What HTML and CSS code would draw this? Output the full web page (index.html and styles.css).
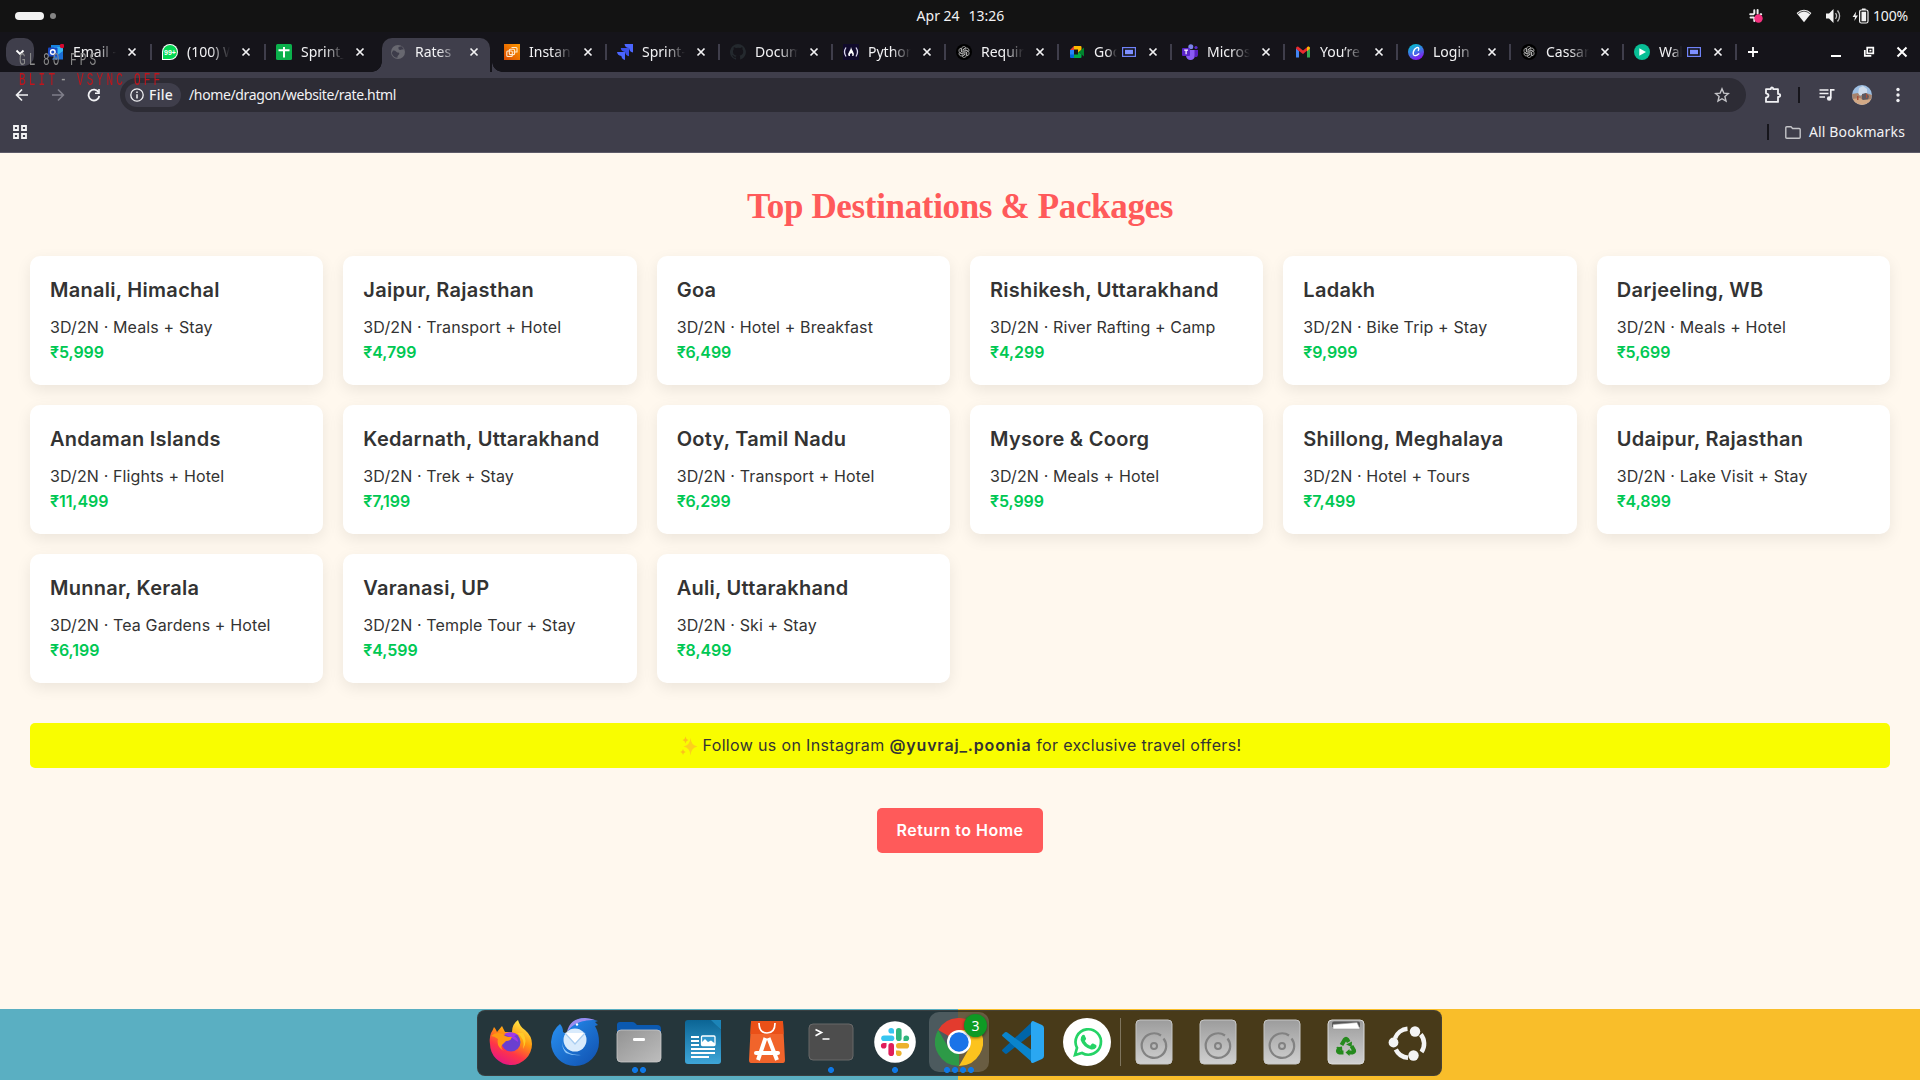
FILE: index.html
```html
<!DOCTYPE html>
<html lang="en">
<head>
<meta charset="utf-8">
<title>Rates</title>
<link rel="stylesheet" href="styles.css">
</head>
<body>
<svg class="defs" width="0" height="0" aria-hidden="true">
  <defs>
    <linearGradient id="grey" x1="0" y1="0" x2="0" y2="1"><stop offset="0" stop-color="#9c9c9c"/><stop offset="1" stop-color="#d0d0d0"/></linearGradient>
    <linearGradient id="folder" x1="0" y1="0" x2="1" y2="1"><stop offset="0" stop-color="#939393"/><stop offset="1" stop-color="#bdbdbd"/></linearGradient>
    <linearGradient id="fox" x1=".8" y1="0" x2=".3" y2="1"><stop offset="0" stop-color="#fff44f"/><stop offset=".4" stop-color="#ff980e"/><stop offset=".7" stop-color="#ff3647"/><stop offset="1" stop-color="#e31587"/></linearGradient>
    <linearGradient id="bird" x1="0" y1="0" x2="1" y2="1"><stop offset="0" stop-color="#2a94f4"/><stop offset="1" stop-color="#0f4fae"/></linearGradient>
    <linearGradient id="orange" x1="0" y1="1" x2="1" y2="0"><stop offset="0" stop-color="#d94a00"/><stop offset="1" stop-color="#ff9900"/></linearGradient>
    <linearGradient id="canva" x1=".2" y1="0" x2=".6" y2="1"><stop offset="0" stop-color="#00c4cc"/><stop offset=".5" stop-color="#3c78e6"/><stop offset="1" stop-color="#8b10f0"/></linearGradient>
    <linearGradient id="writer" x1="0" y1="0" x2="0" y2="1"><stop offset="0" stop-color="#0b6595"/><stop offset="1" stop-color="#3ea6d8"/></linearGradient>
    <symbol id="close" viewBox="0 0 10 10"><path d="M1.500 1.500l7 7m0-7l-7 7" stroke="#f2f2f4" stroke-width="1.700" fill="none"/></symbol>
    <symbol id="openai" viewBox="0 0 16 16"><circle cx="8" cy="8" r="8" fill="#000"/><g fill="none" stroke="#c9c9c9" stroke-width=".7"><path id="petal" d="M5.600 8.200V4.800a2.300 2.300 0 0 1 4.300-1.100L7.200 5.300v2.800"/><use href="#petal" transform="rotate(60 8 8)"/><use href="#petal" transform="rotate(120 8 8)"/><use href="#petal" transform="rotate(180 8 8)"/><use href="#petal" transform="rotate(240 8 8)"/><use href="#petal" transform="rotate(300 8 8)"/></g></symbol>
    <symbol id="share" viewBox="0 0 14 10"><rect x=".6" y=".6" width="12.800" height="8.800" fill="none" stroke="#6f82f8" stroke-width="1.200"/><rect x="3" y="2.800" width="8" height="4.400" fill="#7e90ff"/></symbol>
    <symbol id="disk" viewBox="0 0 48 48"><rect x="6" y="2" width="36" height="44" rx="4" fill="url(#grey)" stroke="#c6c6c6" stroke-width="1"/><path d="M31 17.500A12.300 12.300 0 1 0 36.200 29" fill="none" stroke="#828282" stroke-width="2.200"/><path d="M33.500 20.500a12.300 12.300 0 0 1 2.700 8.500" fill="none" stroke="#828282" stroke-width="2.200"/><circle cx="24" cy="28" r="3" fill="none" stroke="#828282" stroke-width="2"/></symbol>
  </defs>
</svg>

<header class="topbar">
  <div class="workspaces"><span class="ws-active"></span><span class="ws-dot"></span></div>
  <div class="clock"><span>Apr 24</span><span>13:26</span></div>
  <div class="tray">
    <svg class="tray-slack" width="16" height="16" viewBox="0 0 16 16"><g stroke="#eee" stroke-width="2" stroke-linecap="round"><path d="M2.200 6.200h3.300M6.300 2.300v.2M6.300 3v2.300M9.600 2v3.400M12.600 6.300h.6M2.600 9.600h.3M3.800 9.600h1.800M6.300 9.800v3.300"/></g><circle cx="10.500" cy="10.500" r="4.200" fill="#f5317f"/></svg>
    <svg class="tray-wifi" width="16" height="14" viewBox="0 0 16 14"><path d="M.6 4Q8-2.500 15.400 4L8 13.300z" fill="#f2f2f2"/><path d="M2 4.700Q8-.3 14 4.700" fill="none" stroke="#555" stroke-width="1"/></svg>
    <svg class="tray-vol" width="17" height="16" viewBox="0 0 17 16"><path d="M1 5.500h3L8.500 1v14L4 10.500H1z" fill="#f2f2f2"/><path d="M10.500 5.200q2.200 2.800 0 5.600M12.500 2.500q4.200 5.500 0 11" fill="none" stroke="#bbb" stroke-width="1.300"/></svg>
    <svg class="tray-bat" width="17" height="16" viewBox="0 0 17 16"><path d="M4.200 3.500L.6 9H3l-.7 4L6 7.400H3.500z" fill="#f2f2f2"/><rect x="7.600" y="2" width="8.400" height="13" rx="1.800" fill="none" stroke="#f2f2f2" stroke-width="1.200"/><path d="M9.500 3.800h4.600v9.400H9.500zM10 .4h3.600V2H10z" fill="#f2f2f2"/></svg>
    <span>100%</span>
  </div>
</header>

<section class="browser">
  <div class="tabstrip">
    <button class="tab-search"><svg width="10" height="7" viewBox="0 0 10 7"><path d="M1.500 1.500L5 5l3.500-3.500" fill="none" stroke="#fff" stroke-width="1.800"/></svg></button>
    <div class="tabs">
      <div class="tab"><svg class="fav" viewBox="0 0 16 16"><path d="M3 1h9v10H3z" fill="#1684e0"/><path d="M6 3h9v5L6 14z" fill="#36b7f5"/><path d="M4 15l11-8v8.500H4z" fill="#1b6fd8"/><rect x="0" y="3.500" width="9.500" height="9" rx="1" fill="#1a49c4"/><circle cx="4.800" cy="8" r="2.300" fill="none" stroke="#fff" stroke-width="1.400"/><circle cx="14" cy="2" r="2.200" fill="#d6082e"/></svg><span class="label">Email -</span><svg class="x"><use href="#close"/></svg></div>
      <div class="tab"><svg class="fav" viewBox="0 0 16 16"><path d="M0 16V8a8 8 0 1 1 8 8z" fill="#fff"/><path d="M1 15V8a7 7 0 1 1 7 7z" fill="#06d755"/><text x="8" y="10.800" class="fav-99">99+</text></svg><span class="label">(100) W</span><svg class="x"><use href="#close"/></svg></div>
      <div class="tab no-sep"><svg class="fav" viewBox="0 0 16 16"><rect width="16" height="16" rx="1.500" fill="#0bb14c"/><path d="M2.500 6.200h11M8 3v10.500" stroke="#fff" stroke-width="2"/></svg><span class="label">Sprint_</span><svg class="x"><use href="#close"/></svg></div>
      <div class="tab active"><svg class="fav" viewBox="0 0 16 16"><circle cx="8" cy="8" r="7" fill="#686870"/><path d="M3 6.500q2-.5 3 1t3 1q1 1.500-.5 2.500t-1 2.800Q3 13.500 1.800 9zM8.500 3l3-.8 2.500 3-2 .3q-2.500 1-3.500-.6z" fill="#3d3c4a"/></svg><span class="label">Rates |</span><svg class="x"><use href="#close"/></svg></div>
      <div class="tab"><svg class="fav" viewBox="0 0 16 16"><rect width="16" height="16" fill="url(#orange)"/><g fill="none" stroke="#ffe9cf" stroke-width="1.100"><rect x="2.800" y="7" width="5.500" height="5.500" rx="1"/><rect x="5.300" y="5.300" width="5.300" height="5.300" rx="1"/><path d="M7.500 3.500H12q1 0 1 1v3.500H9.500"/></g></svg><span class="label">Instanc</span><svg class="x"><use href="#close"/></svg></div>
      <div class="tab"><svg class="fav" viewBox="0 0 16 16"><path d="M7.500 0H16v8.500Q12.500 8 12 4 8 3.800 7.500 0z" fill="#4b66ff"/><path d="M3.800 4h8.200v8.200Q8.800 12 8 8 4 7.500 3.800 4z" fill="#3a4fe8"/><path d="M0 8h8v8Q5 15.500 4.300 12 .5 11.500 0 8z" fill="#4b66ff"/></svg><span class="label">Sprint-</span><svg class="x"><use href="#close"/></svg></div>
      <div class="tab"><svg class="fav" viewBox="0 0 16 16"><path d="M8 0a8 8 0 0 0-2.500 15.600c.4 0 .5-.2.500-.4v-1.500c-2.200.5-2.700-1-2.700-1-.4-.9-.9-1.200-.9-1.200-.7-.5 0-.5 0-.5.8.1 1.200.8 1.200.8.8 1.300 2 .9 2.500.7 0-.5.300-.9.500-1.100-1.800-.2-3.600-.9-3.600-4 0-.9.300-1.600.8-2.100 0-.2-.4-1 .1-2.100 0 0 .7-.2 2.200.8a8 8 0 0 1 4 0c1.500-1 2.200-.8 2.200-.8.4 1.100.2 1.900.1 2.100.5.600.8 1.300.8 2.100 0 3.100-1.900 3.800-3.700 4 .3.300.6.800.6 1.500v2.200c0 .2.100.5.600.4A8 8 0 0 0 8 0z" fill="#24292e"/></svg><span class="label">Docum</span><svg class="x"><use href="#close"/></svg></div>
      <div class="tab"><svg class="fav" viewBox="0 0 16 16"><rect width="16" height="16" fill="#100a2b"/><path d="M3 3.500q-3 4.500 0 9M13 3.500q3 4.500 0 9" fill="none" stroke="#d9d6ef" stroke-width="1.300"/><path d="M8 3q.6 2.500 2 4.500t.4 4.500H9.200Q10 9.500 8.200 9q-2 .8-1.200 3H5.600Q4.600 9.500 6.300 7.500T8 3z" fill="#fff"/></svg><span class="label">Python</span><svg class="x"><use href="#close"/></svg></div>
      <div class="tab"><svg class="fav"><use href="#openai"/></svg><span class="label">Requir</span><svg class="x"><use href="#close"/></svg></div>
      <div class="tab"><svg class="fav" viewBox="0 0 16 16"><path d="M1 6l4-4v4z" fill="#ea4335"/><path d="M5 2h6.500q1 0 1 1v3.500L9 9V5.500H5z" fill="#ffba00"/><path d="M1 6h4v5H1z" fill="#2684fc"/><path d="M1 10.500h4V14H2q-1 0-1-1z" fill="#0066da"/><path d="M5 10.500h4V8l3.500 2v3q0 1-1 1H5z" fill="#00ac47"/><path d="M9.500 8L15 3.500v9z" fill="#00832d"/></svg><span class="label short">Goo</span><svg class="share"><use href="#share"/></svg><svg class="x"><use href="#close"/></svg></div>
      <div class="tab"><svg class="fav" viewBox="0 0 16 16"><circle cx="8.800" cy="2.800" r="2.500" fill="#7b83eb"/><circle cx="14" cy="3.500" r="1.600" fill="#5b2bd0"/><path d="M4 6h9v5.500a4.500 4.500 0 0 1-9 0z" fill="#8a5cf5"/><path d="M12.500 6H16v4.500q0 3-3.500 2.500z" fill="#5b20c5"/><rect x="0" y="4" width="8" height="8" rx="1" fill="#5a25c9"/><path d="M2.200 6.200h3.800M4.100 6.200v4" stroke="#fff" stroke-width="1.200"/></svg><span class="label">Micros</span><svg class="x"><use href="#close"/></svg></div>
      <div class="tab"><svg class="fav" viewBox="0 0 16 16"><path d="M1 4v9.500h3V7z" fill="#4285f4"/><path d="M12 7v6.500h3V4z" fill="#34a853"/><path d="M1 4.500Q1 2.500 3 2.600L8 6.500l5-3.900q2-.1 2 1.900L12 7.200v-.4L8 10 4 7v.2z" fill="#ea2a2f"/><path d="M12 3.500l1-.9q2-.1 2 1.900l-3 2.700z" fill="#fbbc04"/></svg><span class="label">You’re</span><svg class="x"><use href="#close"/></svg></div>
      <div class="tab"><svg class="fav" viewBox="0 0 16 16"><circle cx="8" cy="8" r="8" fill="url(#canva)"/><path d="M10.300 6.500q1-1.700.2-2.700-1.400-1-3.600 1.200-2.400 3-1.500 5.500 1.500 2.700 5.500-.7" fill="none" stroke="#fff" stroke-width="1.300" stroke-linecap="round"/></svg><span class="label">Login |</span><svg class="x"><use href="#close"/></svg></div>
      <div class="tab"><svg class="fav"><use href="#openai"/></svg><span class="label">Cassan</span><svg class="x"><use href="#close"/></svg></div>
      <div class="tab"><svg class="fav" viewBox="0 0 16 16"><circle cx="8" cy="8" r="8" fill="#08be95"/><path d="M5.300 4.300L12 8l-6.700 3.700z" fill="#fff"/></svg><span class="label short">Wal</span><svg class="share"><use href="#share"/></svg><svg class="x"><use href="#close"/></svg></div>
    </div>
    <svg class="newtab" width="12" height="12" viewBox="0 0 12 12"><path d="M6 1v10M1 6h10" stroke="#fff" stroke-width="1.800"/></svg>
    <div class="winctl">
      <svg width="12" height="12" viewBox="0 0 12 12"><path d="M1 10h10" stroke="#fff" stroke-width="2"/></svg>
      <svg width="12" height="12" viewBox="0 0 12 12"><path d="M4.200 1.700h6.100v5.600H4.200zM1.800 4v5.900h6.500" fill="none" stroke="#fff" stroke-width="1.700"/><path d="M6.400 3.800h2v1.600h-2z" fill="#fff"/></svg>
      <svg width="12" height="12" viewBox="0 0 12 12"><path d="M1.500 1.500l9 9m0-9l-9 9" stroke="#fff" stroke-width="2"/></svg>
    </div>
  </div>

  <div class="toolbar">
    <div class="nav">
      <svg width="14" height="14" viewBox="0 0 14 14"><path d="M13 7H2M7 1.500L1.600 7 7 12.500" fill="none" stroke="#f1f1f4" stroke-width="1.700"/></svg>
      <svg width="14" height="14" viewBox="0 0 14 14"><path d="M1 7h11M7 1.500L12.400 7 7 12.500" fill="none" stroke="#7f7e8a" stroke-width="1.600"/></svg>
      <svg width="14" height="14" viewBox="0 0 14 14"><path d="M11.600 4.300A5.400 5.400 0 1 0 12.300 8" fill="none" stroke="#f1f1f4" stroke-width="1.800"/><path d="M12.800 1v5H8V4.400h3.200V1z" fill="#f1f1f4"/></svg>
    </div>
    <div class="omnibox">
      <div class="chip"><svg width="14" height="14" viewBox="0 0 14 14"><circle cx="7" cy="7" r="6.200" fill="none" stroke="#f1f1f4" stroke-width="1.300"/><path d="M7 6.300v4.200M7 3.500v1.500" stroke="#f1f1f4" stroke-width="1.500"/></svg><span>File</span></div>
      <span class="url">/home/dragon/website/rate.html</span>
      <svg class="star" width="16" height="16" viewBox="0 0 16 16"><path d="M8 1.800l1.800 4.300 4.600.4-3.500 3 1.100 4.600L8 11.700l-4 2.400 1.100-4.600-3.500-3 4.600-.4z" fill="none" stroke="#c4c4c8" stroke-width="1.400"/></svg>
    </div>
    <div class="actions">
      <svg width="18" height="18" viewBox="0 0 18 18"><path d="M2 3.200h4.700q0-1.700 1.300-1.700t1.300 1.700H14v4.700q2.200 0 2.200 1.500T14 10.900v5H2v-4.200q2.500-.5 2.500-2.200T2 7.300z" fill="none" stroke="#f1f1f4" stroke-width="1.800" stroke-linejoin="round"/></svg>
      <span class="divider"></span>
      <svg width="16" height="14" viewBox="0 0 16 14"><path d="M.5 2h9M.5 5.500h9M.5 9h5.500M11.800 10V1.800h3.700" fill="none" stroke="#f1f1f4" stroke-width="1.700"/><circle cx="10.200" cy="10.500" r="2.300" fill="#f1f1f4"/></svg>
      <svg width="20" height="20" viewBox="0 0 20 20"><clipPath id="av"><circle cx="10" cy="10" r="10"/></clipPath><g clip-path="url(#av)"><path d="M0 0h20v20H0z" fill="#9dbfe3"/><path d="M7 3l4-2 4 3v6H6z" fill="#cfdceb"/><path d="M0 9l6-1 2 3 6-3 6 2v8H0z" fill="#a5836d"/><path d="M10 9l4-1 3 3-1 4h-6z" fill="#5f5a60"/><path d="M0 14l8-1 3 2 9-1v6H0z" fill="#d2a986"/><path d="M5 11h1.500v4H5zM14 9h1.200v4H14z" fill="#a8503b"/></g></svg>
      <svg width="4" height="16" viewBox="0 0 4 16"><g fill="#f1f1f4"><circle cx="2" cy="2.500" r="1.700"/><circle cx="2" cy="8" r="1.700"/><circle cx="2" cy="13.500" r="1.700"/></g></svg>
    </div>
  </div>

  <div class="bookmarks">
    <svg width="14" height="14" viewBox="0 0 14 14"><path d="M1 1h4v4H1zM9 1h4v4H9zM1 9h4v4H1zM9 9h4v4H9z" fill="none" stroke="#f4f4f6" stroke-width="1.800"/></svg>
    <div class="all"><span class="divider"></span><svg width="16" height="13" viewBox="0 0 16 13"><path d="M.8 1.800q0-1 1-1H6l1.600 1.700h6.600q1 0 1 1v7.700q0 1-1 1H1.800q-1 0-1-1z" fill="none" stroke="#c4c4c8" stroke-width="1.400"/></svg><span>All Bookmarks</span></div>
  </div>
</section>

<div class="overlay">
  <span class="o1">GL</span><span class="o2">80</span><span class="o3">FPS</span>
  <span class="o4">BLIT</span><span class="o5">-</span><span class="o6">VSYNC</span><span class="o7">OFF</span>
</div>

<main class="page">
  <h1>Top Destinations &amp; Packages</h1>
  <div class="grid">
    <article class="card"><h3>Manali, Himachal</h3><p>3D/2N · Meals + Stay</p><p class="price">₹5,999</p></article>
    <article class="card"><h3>Jaipur, Rajasthan</h3><p>3D/2N · Transport + Hotel</p><p class="price">₹4,799</p></article>
    <article class="card"><h3>Goa</h3><p>3D/2N · Hotel + Breakfast</p><p class="price">₹6,499</p></article>
    <article class="card"><h3>Rishikesh, Uttarakhand</h3><p>3D/2N · River Rafting + Camp</p><p class="price">₹4,299</p></article>
    <article class="card"><h3>Ladakh</h3><p>3D/2N · Bike Trip + Stay</p><p class="price">₹9,999</p></article>
    <article class="card"><h3>Darjeeling, WB</h3><p>3D/2N · Meals + Hotel</p><p class="price">₹5,699</p></article>
    <article class="card"><h3>Andaman Islands</h3><p>3D/2N · Flights + Hotel</p><p class="price">₹11,499</p></article>
    <article class="card"><h3>Kedarnath, Uttarakhand</h3><p>3D/2N · Trek + Stay</p><p class="price">₹7,199</p></article>
    <article class="card"><h3>Ooty, Tamil Nadu</h3><p>3D/2N · Transport + Hotel</p><p class="price">₹6,299</p></article>
    <article class="card"><h3>Mysore &amp; Coorg</h3><p>3D/2N · Meals + Hotel</p><p class="price">₹5,999</p></article>
    <article class="card"><h3>Shillong, Meghalaya</h3><p>3D/2N · Hotel + Tours</p><p class="price">₹7,499</p></article>
    <article class="card"><h3>Udaipur, Rajasthan</h3><p>3D/2N · Lake Visit + Stay</p><p class="price">₹4,899</p></article>
    <article class="card"><h3>Munnar, Kerala</h3><p>3D/2N · Tea Gardens + Hotel</p><p class="price">₹6,199</p></article>
    <article class="card"><h3>Varanasi, UP</h3><p>3D/2N · Temple Tour + Stay</p><p class="price">₹4,599</p></article>
    <article class="card"><h3>Auli, Uttarakhand</h3><p>3D/2N · Ski + Stay</p><p class="price">₹8,499</p></article>
  </div>
  <div class="banner">
    <svg width="19" height="20" viewBox="0 0 19 20"><path d="M11.500 2q.7 7.500 7 8.500-6.300 1-7 9-.7-8-7-9 6.300-1 7-8.500z" fill="#fdd01c"/><path d="M6.500.5q.3 3 3 3.500-2.700.5-3 3.500-.3-3-3-3.500 2.700-.5 3-3.500zM4 13q.3 2.500 2.800 3-2.500.5-2.800 3-.3-2.500-2.800-3 2.500-.5 2.800-3z" fill="#fcc21b"/></svg>
    <span>Follow us on Instagram <b>@yuvraj_.poonia</b> for exclusive travel offers!</span>
  </div>
  <a class="home">Return to Home</a>
</main>

<footer class="desktop">
  <nav class="dock">
    <div class="app"><svg width="48" height="48" viewBox="0 0 48 48"><path d="M4 15q2-3 3-6 2 2 3 5l5-6 3 6h7q0-8 6-12 2 7 7 10 7 6 7 14A21 21 0 0 1 3 26Q2 20 4 15z" fill="url(#fox)"/><circle cx="24" cy="24" r="9.500" fill="#6a3fd0"/><path d="M17 16q8-4 14 1-2 0-4 1 4 2 4 6l-6-4z" fill="#a13ae6"/><path d="M4 18q5-5 12-2 1 3 9 3-1 4-6 4l-4 4q-2 3 2 6-8-4-6-12-4-3-7-3z" fill="#ff9a12"/><path d="M30 15q9 6 6 16 5-8 0-16z" fill="#ffca28"/></svg></div>
    <div class="app"><svg width="48" height="48" viewBox="0 0 48 48"><path d="M0 24Q1 12 9 6q3 3 3 8l5 3Q19 0 34 0q7 1 13 3l-3 1 3 3-3 1q4 7 4 16A24 24 0 0 1 0 24z" fill="url(#bird)"/><path d="M16 14Q19 0 34 0q6 .5 10 2-8-.5-14 2Q22 7 16 14z" fill="#9a8cf0"/><path d="M17 13Q24 3 36 3q-8 3-9 8l8 7-20 6z" fill="#1e7de0"/><path d="M11 24q1 13 19 13-8 1-15-2-4-4-4-11z" fill="#8fc8fa"/><circle cx="24" cy="22" r="11.500" fill="#d9ebfc"/><path d="M14 15l10 11 10-11" fill="#fff" stroke="#a9cdf0" stroke-width="1.200"/><circle cx="26" cy="6.500" r="1.200" fill="#fff"/></svg></div>
    <div class="app"><svg width="48" height="48" viewBox="0 0 48 48"><path d="M2 7q0-3 3-3h12q2 0 3 1l2 2h20q4 0 4 4v12H2z" fill="#0b59b0"/><rect x="2" y="12" width="44" height="32" rx="4" fill="url(#folder)" stroke="#c9c9c9" stroke-width=".8"/><rect x="18" y="20" width="12" height="3" rx="1.300" fill="#fff"/></svg><i class="dots n2"></i></div>
    <div class="app"><svg width="48" height="48" viewBox="0 0 48 48"><path d="M9 2h24l9 10v31q0 3-3 3H9q-3 0-3-3V5q0-3 3-3z" fill="url(#writer)"/><path d="M32 2h10v10z" fill="#1c84b8"/><g stroke="#fff" stroke-width="2"><path d="M12 19h8M12 23h8M12 27h8M12 31h24M12 35h24M12 39h18"/></g><rect x="22.500" y="18" width="13.500" height="9.500" rx="1" fill="#2f96cc" stroke="#fff" stroke-width="1.300"/><path d="M23 27v-3l3-3 3 3 3-1.500 4 3V27z" fill="#fff"/></svg></div>
    <div class="app"><svg width="48" height="48" viewBox="0 0 48 48"><path d="M8 4q0-1 1-1h30q1 0 1 1l2 38q0 3-2 3H8q-2 0-2-3z" fill="#f1642b"/><path d="M8 4q0-1 1-1h30q1 0 1 1l.6 12H7.400z" fill="#ea5018"/><path d="M16 5q0 10 8 10t8-10" fill="none" stroke="#fff" stroke-width="1.700"/><path d="M22.500 20L15 42m10.500-22L34 42" stroke="#fff" stroke-width="4"/><path d="M13 35h22" stroke="#fff" stroke-width="4" stroke-linecap="round"/></svg></div>
    <div class="app"><svg width="48" height="48" viewBox="0 0 48 48"><rect x="2" y="6" width="44" height="36" rx="4" fill="#4d4d4d" stroke="#696969" stroke-width="1"/><path d="M8.500 11.500l6 3-6 3.200M15.500 21h7" fill="none" stroke="#fff" stroke-width="1.700"/></svg><i class="dots n1"></i></div>
    <div class="app"><svg width="48" height="48" viewBox="0 0 48 48"><circle cx="24" cy="24" r="20.800" fill="#fff"/><g stroke-width="5.600" stroke-linecap="round"><path d="M13 20.200h7.500" stroke="#36c5f0"/><path d="M27.800 12.800v7.500" stroke="#2eb67d"/><path d="M27.800 27.800h7.500" stroke="#ecb22e"/><path d="M20.200 27.800v7.500" stroke="#e01e5a"/></g><path d="M23 15.500h-2.800a2.800 2.800 0 1 1 2.800-2.800z" fill="#36c5f0"/><path d="M32.500 23v-2.800a2.800 2.800 0 1 1 2.800 2.800z" fill="#2eb67d"/><path d="M25 32.500h2.800a2.800 2.800 0 1 1-2.800 2.800z" fill="#ecb22e"/><path d="M15.500 25v2.800a2.800 2.800 0 1 1-2.800-2.800z" fill="#e01e5a"/></svg><i class="dots n1"></i></div>
    <div class="app current"><svg width="48" height="48" viewBox="0 0 48 48"><path d="M24 24L3.200 12A24 24 0 0 1 44.800 12z" fill="#e33b2e"/><path d="M24 24L24 48A24 24 0 0 1 3.200 12L13.600 30z" fill="#2d9a47"/><path d="M24 12h20.800A24 24 0 0 1 24 48l10.400-18z" fill="#fcc31e"/><circle cx="24" cy="24" r="12" fill="#fff"/><circle cx="24" cy="24" r="9.700" fill="#1a73e8"/></svg><i class="dots n4"></i><b class="badge">3</b></div>
    <div class="app"><svg width="48" height="48" viewBox="0 0 48 48"><path d="M3.500 31.500L34 3v12L8 35.500q-1 .8-2 0l-2.500-2.200q-1-1 0-1.800z" fill="#0065a9"/><path d="M3.500 16.500l2.500-2.200q1-.8 2 0L34 33v12L3.500 18.300q-1-1 0-1.800z" fill="#0a84cc"/><path d="M34 3l9 4q2 1 2 3v28q0 2-2 3l-9 4q-1.500.3-2-1V5q.5-2 2-2z" fill="#2aa7f2"/></svg></div>
    <div class="app"><svg width="48" height="48" viewBox="0 0 48 48"><circle cx="24" cy="24" r="24" fill="#fff"/><path d="M12 37l2-7.200A12.700 12.700 0 1 1 19 35z" fill="none" stroke="#25d366" stroke-width="2.700"/><path d="M19.500 17q1-.7 2 0l1.600 3.500q.2.800-1.300 2.400 2 3.600 5.400 4.800l1.700-2q.5-.5 1.200-.2l3 1.600q.8.600.1 2.300-1.700 2.500-5 2-8-2-10.600-9.400-.2-3.200 1.900-5z" fill="#25d366"/></svg></div>
    <span class="dock-sep"></span>
    <div class="app"><svg width="48" height="48"><use href="#disk"/></svg></div>
    <div class="app"><svg width="48" height="48"><use href="#disk"/></svg></div>
    <div class="app"><svg width="48" height="48"><use href="#disk"/></svg></div>
    <div class="app"><svg width="48" height="48" viewBox="0 0 48 48"><rect x="6" y="2" width="36" height="44" rx="4" fill="url(#grey)" stroke="#dadada" stroke-width="1"/><path d="M10 5.500q0-2 2-2h24q2 0 2 2V9H10z" fill="#555"/><path d="M11 6.500l24-2 3 6.500H11z" fill="#fff" stroke="#999" stroke-width=".6"/><g fill="none" stroke="#258a1d" stroke-width="4"><path d="M19.500 27l3.300-5.500q1.200-1.500 2.400 0l1.500 2.500"/><path d="M29.500 28l2.500 4.200q.6 2-1.500 2.300h-4"/><path d="M21.500 34.500h-4q-2.200-.4-1.300-2.500l1.300-2.500"/></g><path d="M24 26.500l6-3-.3 5.500zM27.500 31v7l-4-3.500zM14 29.500l6-1 .5 5.500z" fill="#258a1d"/></svg></div>
    <div class="app last"><svg width="48" height="48" viewBox="0 0 48 48"><g fill="none" stroke="#f4f4f4" stroke-width="4.500"><path d="M10 20.300A14.500 14.500 0 0 1 22.500 10.800"/><path d="M35.800 16.500A14.500 14.500 0 0 1 36.500 34"/><path d="M10.800 31.500A14.500 14.500 0 0 0 23 39.700"/></g><g fill="#f4f4f4"><circle cx="8.500" cy="24.500" r="4.900"/><circle cx="30" cy="13.500" r="5.200"/><circle cx="28.500" cy="37.500" r="5.200"/></g></svg></div>
  </nav>
</footer>
</body>
</html>
```
FILE: styles.css
```css
* { box-sizing: border-box; }
body {
  margin: 0;
  width: 1920px;
  height: 1080px;
  overflow: hidden;
  display: flex;
  flex-direction: column;
  position: relative;
  background: #16151b;
  color: #f2f2f4;
  font: 14px/20px "Noto Sans", "Open Sans", sans-serif;
}
svg { display: block; flex: none; }
.defs { position: absolute; }

/* system bar */
.topbar {
  height: 32px;
  background: #131313;
  display: grid;
  grid-template-columns: 1fr auto 1fr;
  align-items: center;
}
.workspaces { display: flex; align-items: center; gap: 6px; padding-left: 15px; }
.ws-active { width: 29px; height: 8px; border-radius: 4px; background: #f2f2f2; }
.ws-dot { width: 6px; height: 6px; border-radius: 50%; background: #858585; }
.clock { display: flex; gap: 9px; padding-bottom: 1px; padding-left: 1px; }
.tray { display: flex; align-items: center; justify-content: flex-end; padding-right: 12px; }
.tray-slack { margin-right: 32px; }
.tray-wifi { margin-right: 13px; }
.tray-vol { margin-right: 10px; }
.tray-bat { margin-right: 4px; }
.tray span { letter-spacing: -.16px; }

/* browser frame */
.browser { height: 121px; background: #3f3e4b; border-bottom: 1px solid #5d5b69; }
.tabstrip { height: 40px; background: #15141a; display: flex; align-items: center; padding-left: 6px; }
.tab-search {
  width: 28px; height: 28px; margin-right: 4px; padding: 0; border: 0; border-radius: 10px;
  background: #3f3e4b; display: flex; align-items: center; justify-content: center;
}
.tabs { height: 40px; display: flex; }
.tab {
  flex: none; width: 113px; position: relative;
  display: flex; align-items: center; padding-left: 10px;
}
.tab:nth-child(-n+4) { width: 114px; }
.tab:not(.active):not(.no-sep)::after {
  content: ""; position: absolute; right: 0; top: 12px; width: 2px; height: 16px; background: #3f3e4b;
}
.tab.active::before {
  content: ""; position: absolute; z-index: 0; left: -8px; right: -8px; top: 6px; bottom: 0;
  background:
    radial-gradient(circle at 0 0, transparent 9.500px, #3f3e4b 10px) 0 100% / 10px 10px no-repeat,
    radial-gradient(circle at 100% 0, transparent 9.500px, #3f3e4b 10px) 100% 100% / 10px 10px no-repeat;
}
.tab.active { z-index: 1; }
.tab.active::after {
  content: ""; position: absolute; left: 2px; right: 4px; top: 6px; bottom: 0;
  background: #3f3e4b; border-radius: 10px 10px 0 0;
}
.tab > * { position: relative; z-index: 1; }
.fav { width: 16px; height: 16px; margin-right: 9px; }
.fav-99 { font: 700 7px "Liberation Sans", sans-serif; fill: #fff; text-anchor: middle; }
.label {
  width: 43px; margin-right: 11px; overflow: hidden; white-space: nowrap;
  -webkit-mask-image: linear-gradient(90deg, #000 55%, transparent);
  mask-image: linear-gradient(90deg, #000 55%, transparent);
}
.label.short { width: 23px; margin-right: 5px; }
.share { width: 14px; height: 10px; margin-right: 12px; }
.x { width: 10px; height: 10px; }
.newtab { margin-left: 10px; }
.winctl { display: flex; gap: 21px; margin-left: auto; padding-right: 12px; }

.toolbar { height: 46px; display: flex; align-items: center; padding-left: 15px; }
.nav { display: flex; gap: 22px; width: 105px; }
.omnibox {
  width: 1626px; height: 34px; border-radius: 17px; background: #2d2c35;
  display: flex; align-items: center; padding: 0 16px 0 5px;
}
.chip {
  height: 24px; width: 56px; border-radius: 12px; background: #3f3e4b; font-weight: 500;
  display: flex; align-items: center; gap: 5px; padding-left: 5px; margin-right: 8px; letter-spacing: .3px;
}
.url { letter-spacing: -.36px; }
.star { margin-left: auto; }
.actions { flex: 1; display: flex; align-items: center; padding-left: 18px; }
.divider { width: 2px; height: 16px; background: #16151b; }
.actions .divider { margin: 0 19px 0 16px; }
.actions svg:nth-of-type(2) { margin-right: 17px; }
.actions svg:nth-of-type(3) { margin-right: 24px; }
.bookmarks { height: 28px; display: flex; align-items: center; justify-content: space-between; padding: 0 15px 0 13px; }
.all { display: flex; align-items: center; letter-spacing: .14px; }
.all .divider { margin-right: 16px; }
.all svg { margin-right: 8px; }

/* renderer statistics drawn over the window corner */
.overlay { position: absolute; left: 0; top: 0; z-index: 5; font: 18px/20px "Liberation Mono", monospace; letter-spacing: 5px; }
.overlay span { position: absolute; top: 50px; transform: scaleX(.62); transform-origin: 0 50%; color: #8b8b8b; white-space: pre; }
.overlay .o1 { left: 19px; }
.overlay .o2 { left: 43px; }
.overlay .o3 { left: 70px; }
.overlay .o4, .overlay .o5, .overlay .o6, .overlay .o7 { top: 70px; color: #c0151c; }
.overlay .o4 { left: 19px; }
.overlay .o5 { left: 60px; color: #9a9a9a; }
.overlay .o6 { left: 77px; }
.overlay .o7 { left: 134px; }

/* page content */
.page {
  height: 856px; background: #fff8ee; color: #333;
  padding: 32px 30px 0; display: flex; flex-direction: column;
  font: 16px/25px Inter, "Open Sans", sans-serif; letter-spacing: .13px;
}
.page h1 {
  margin: 0 0 28px; height: 43px; text-align: center; color: #ff5a5a;
  font: 700 35px/43px "Liberation Serif", serif; letter-spacing: -.34px;
}
.grid { display: grid; grid-template-columns: repeat(6, 1fr); gap: 20px; }
.card { height: 129px; padding: 20px; background: #fff; border-radius: 10px; box-shadow: 0 5px 15px rgba(0, 0, 0, .08); white-space: nowrap; }
.card h3 { margin: 0 0 10px; font-size: 20px; line-height: 29px; font-weight: 600; letter-spacing: .28px; }
.card p { margin: 0; }
.card .price { color: #00c853; font-weight: 600; letter-spacing: -.05px; }
.banner {
  height: 45px; margin-top: 40px; border-radius: 5px; background: #f9fd00;
  display: flex; align-items: center; justify-content: center; gap: 5px; letter-spacing: .35px;
}
.banner b { font-weight: 600; letter-spacing: .84px; }
.home {
  align-self: center; width: 166px; height: 45px; margin-top: 40px; border-radius: 5px;
  background: #ff5a5a; color: #fff; font-weight: 600; line-height: 45px; text-align: center; letter-spacing: .48px;
}

/* desktop strip and dock */
.desktop { height: 71px; background: linear-gradient(90deg, #5aafc2 958px, #f9be2a 958px); display: flex; padding: 1px 0 0 477px; }
.dock {
  width: 965px; height: 66px; border-radius: 8px; border: 1px solid rgba(70, 70, 70, .6);
  background: rgba(22, 20, 20, .78); display: flex; align-items: center; padding: 0 0 2px 1px;
}
.app { width: 64px; height: 60px; flex: none; position: relative; display: flex; align-items: center; justify-content: center; }
.current::before { content: ""; position: absolute; inset: 0 2px; border-radius: 10px; background: rgba(255, 255, 255, .18); }
.app svg { position: relative; }
.dots { position: absolute; bottom: -1px; left: 50%; height: 6px; transform: translateX(-50%); background: radial-gradient(circle, #0f78e6 2.700px, transparent 3.200px) 0 0 / 8px 6px; }
.n1 { width: 8px; }
.n2 { width: 16px; }
.n4 { width: 32px; }
.badge {
  position: absolute; right: 4px; top: 2px; width: 23px; height: 23px; border-radius: 50%;
  background: #0e9a24; box-shadow: 0 1px 3px rgba(0, 0, 0, .5); color: #fff; font-weight: 400; line-height: 23px; text-align: center;
}
.dock-sep { width: 1px; height: 48px; margin: 0 1px; background: rgba(255, 255, 255, .3); }
.last { width: 62px; }
```
